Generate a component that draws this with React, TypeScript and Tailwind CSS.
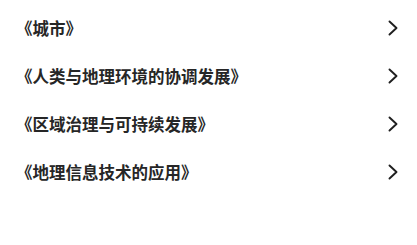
import * as React from "react";

const items = [
  "《城市》",
  "《人类与地理环境的协调发展》",
  "《区域治理与可持续发展》",
  "《地理信息技术的应用》",
];

function Chevron() {
  return (
    <svg width="12" height="16" viewBox="0 0 12 16" fill="none">
      <path d="M2.5 1.5 L9.5 8 L2.5 14.5" stroke="#1f1f1f" strokeWidth="1.9" strokeLinecap="round" strokeLinejoin="round" />
    </svg>
  );
}

export default function App() {
  return (
    <div className="h-[245px] w-[417px] bg-white pt-1" style={{ fontFamily: '"Noto Sans CJK SC", "Noto Sans", sans-serif' }}>
      <ul>
        {items.map((t) => (
          <li key={t} className="flex h-12 items-center justify-between pl-[16px] pr-[18px]">
            <span className="text-[16.5px] font-semibold text-[#262626]">{t}</span>
            <Chevron />
          </li>
        ))}
      </ul>
    </div>
  );
}
